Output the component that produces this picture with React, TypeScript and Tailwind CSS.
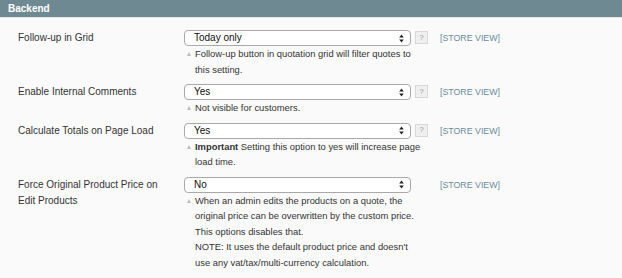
import type { ReactNode } from 'react';

type Row = {
  label: ReactNode;
  value: string;
  help: boolean;
  note: ReactNode;
  wide?: boolean;
};

const rows: Row[] = [
  {
    label: 'Follow-up in Grid',
    value: 'Today only',
    help: true,
    note: 'Follow-up button in quotation grid will filter quotes to this setting.',
  },
  {
    label: 'Enable Internal Comments',
    value: 'Yes',
    help: true,
    note: 'Not visible for customers.',
  },
  {
    label: 'Calculate Totals on Page Load',
    value: 'Yes',
    help: true,
    wide: true,
    note: (
      <>
        <b>Important</b> Setting this option to yes will increase page load time.
      </>
    ),
  },
  {
    label: 'Force Original Product Price on Edit Products',
    value: 'No',
    help: false,
    note: (
      <>
        When an admin edits the products on a quote, the original price can be overwritten by the
        custom price.
        <br />
        This options disables that.
        <br />
        NOTE: It uses the default product price and doesn't use any vat/tax/multi-currency
        calculation.
      </>
    ),
  },
];

function Arrows() {
  return (
    <svg width="5" height="9" viewBox="0 0 5 9" className="text-[#222]">
      <path d="M2.5 0.5 L4.8 3.6 H0.2 Z" fill="currentColor" />
      <path d="M2.5 8.5 L4.8 5.4 H0.2 Z" fill="currentColor" />
    </svg>
  );
}

function FieldRow({ row }: { row: Row }) {
  return (
    <div className="flex py-[3.5px]">
      <div className="w-[184px] shrink-0 pl-[18px] pr-[24px] text-[10px] leading-[16px] text-[#333]">
        {row.label}
      </div>
      <div className="w-[231px] shrink-0">
        <div className="flex h-[16px] w-[227px] items-center justify-between rounded-[4px] border border-[#a9a9a9] bg-white pl-[9px] pr-[6px] text-[10px] text-[#111]">
          <span className="leading-none">{row.value}</span>
          <Arrows />
        </div>
        <div
          className={
            row.wide
              ? 'relative w-[246px] pl-[11px] text-[9.4px] leading-[15.5px] text-[#333]'
              : 'relative w-[236px] pl-[11px] text-[9.4px] leading-[15.5px] text-[#333]'
          }
        >
          <span className="absolute left-[3px] top-[6px] h-0 w-0 border-x-[2.5px] border-b-[4px] border-x-transparent border-b-[#bcbcbc]" />
          {row.note}
        </div>
      </div>
      <div className="w-[25px] shrink-0 pt-[1px]">
        {row.help && (
          <div className="flex h-[13px] w-[13px] items-center justify-center border border-[#d8d8d8] bg-[#efefef] text-[8px] leading-none text-[#9a9a9a]">
            ?
          </div>
        )}
      </div>
      <div className="pt-[1px] text-[8.8px] leading-[14px] text-[#6b8a9b]">[STORE VIEW]</div>
    </div>
  );
}

export default function App() {
  return (
    <div className="h-[278px] w-[622px] overflow-hidden bg-[#fafafa] font-['Liberation_Sans',Arial,sans-serif]">
      <div className="flex h-[17px] items-center bg-[#6f8992] pl-[8px] text-[10px] font-bold text-white">
        Backend
      </div>
      <div className="h-[1px] bg-[#e4e4e4]" />
      <div className="pt-[8.5px]">
        {rows.map((r, i) => (
          <FieldRow key={i} row={r} />
        ))}
      </div>
    </div>
  );
}
